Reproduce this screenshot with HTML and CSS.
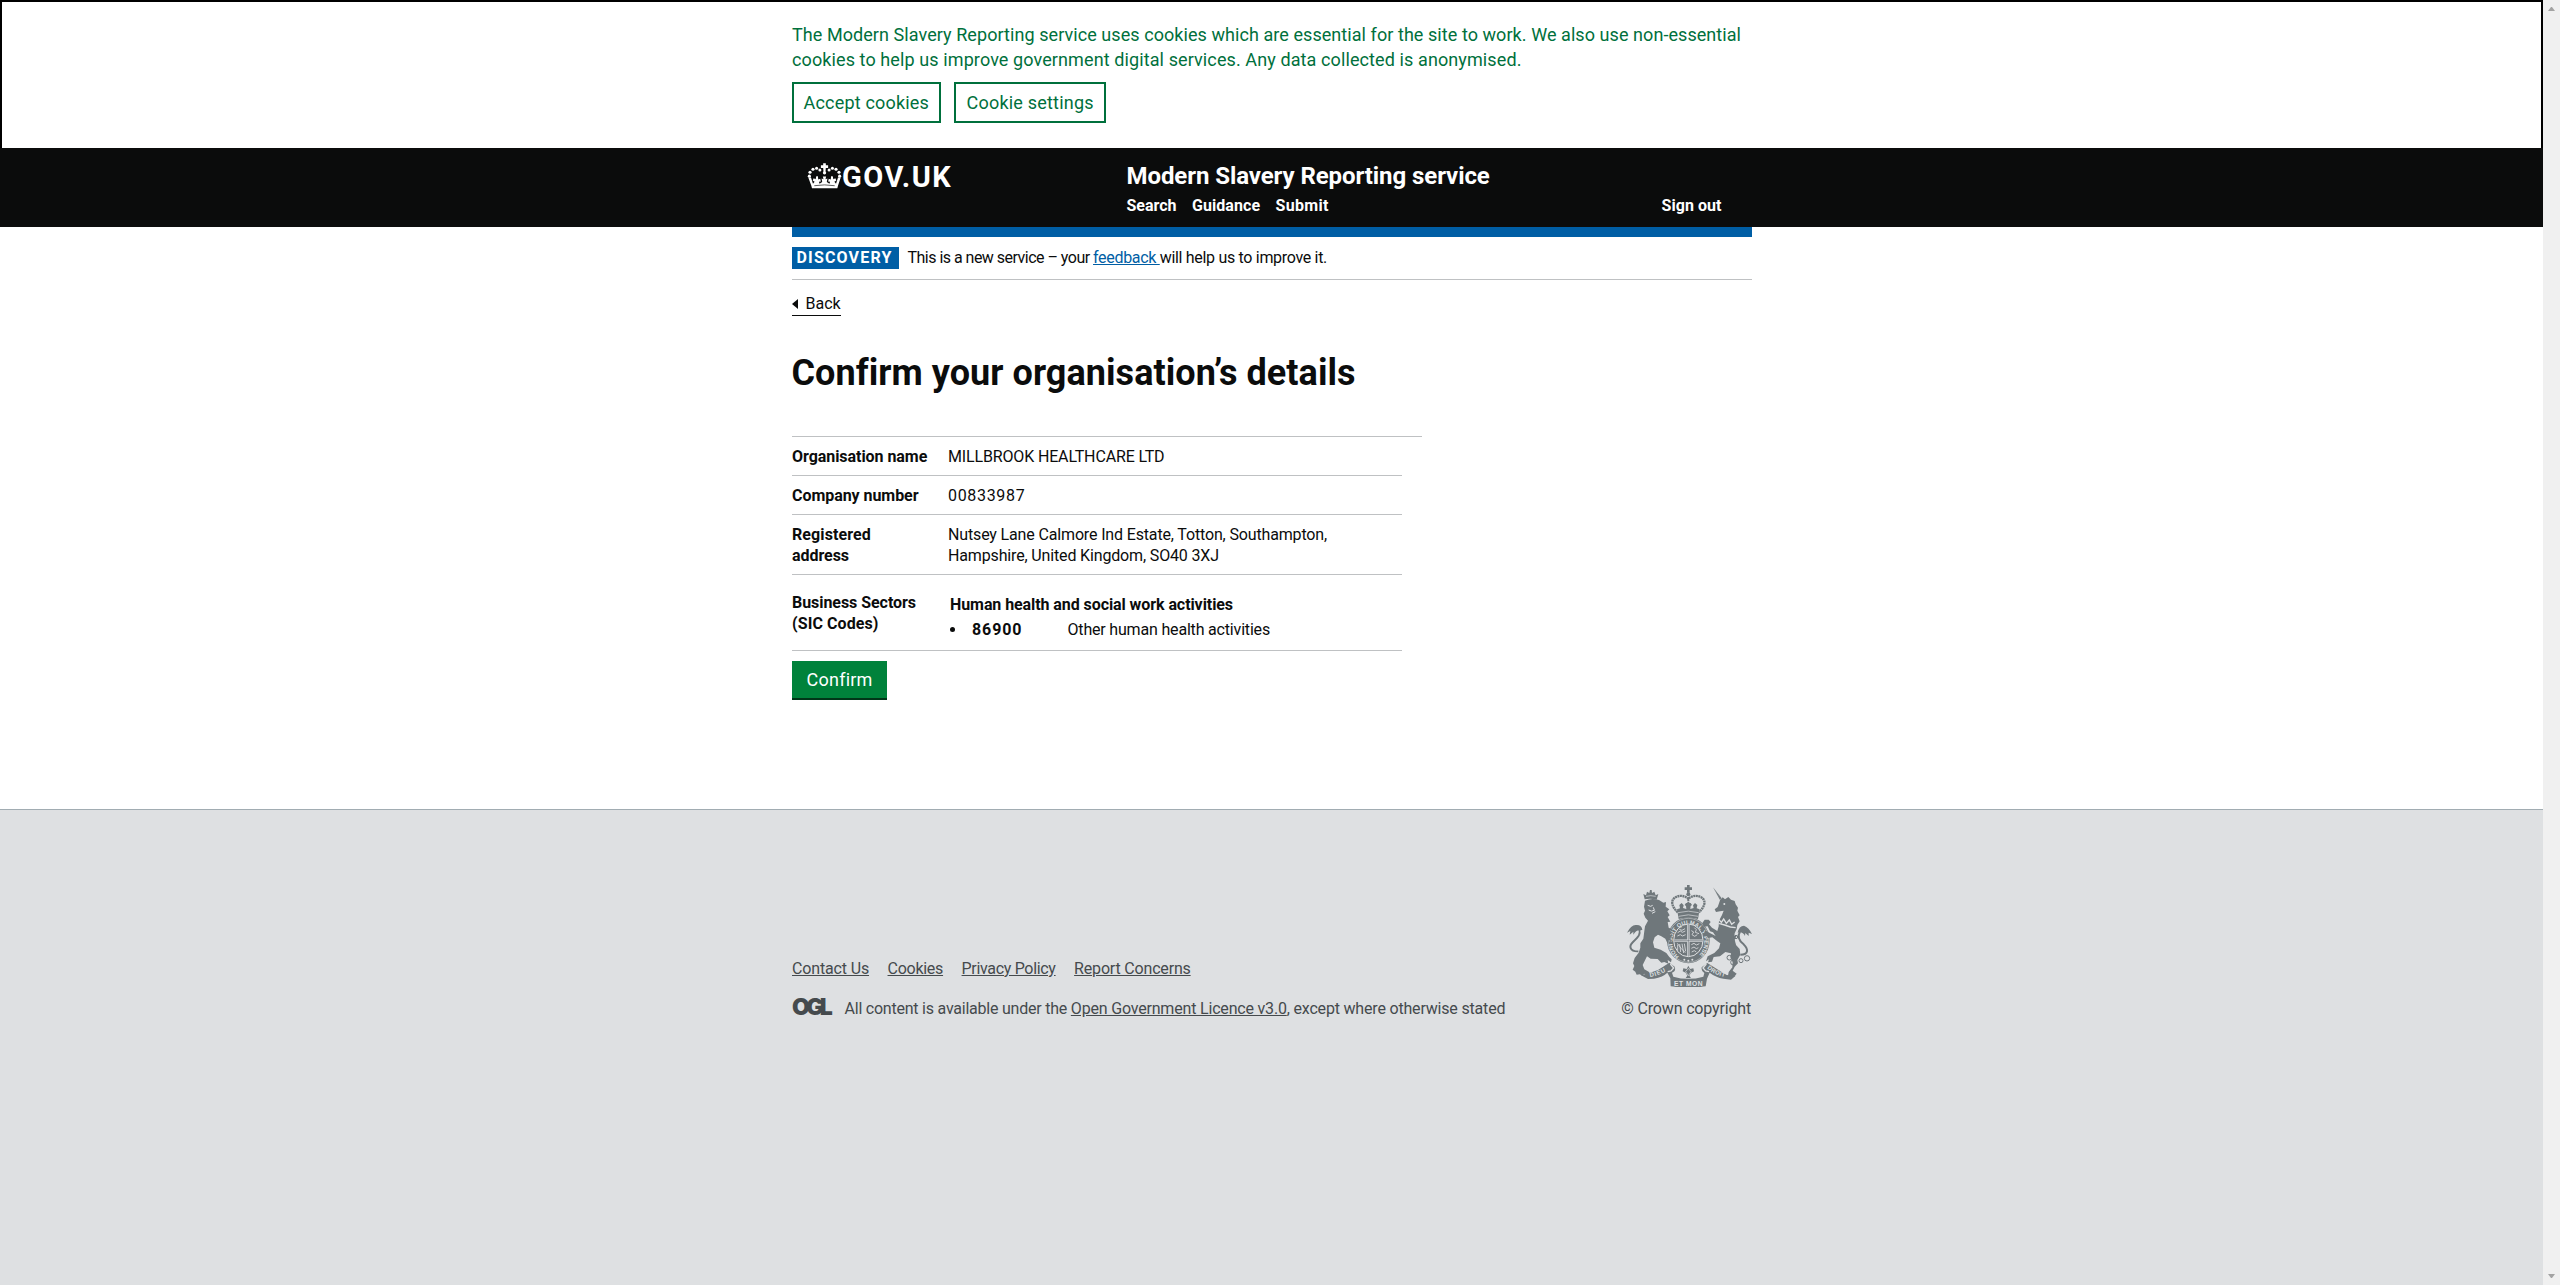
FILE: index.html
```html
<!DOCTYPE html>
<html lang="en">
<head>
<meta charset="utf-8">
<title>Confirm your organisation’s details</title>
<link rel="stylesheet" href="styles.css">
</head>
<body>
<div class="page">
  <section class="cookie-banner">
    <div class="wrap">
      <p class="cookie-text"><span class="cookie-line">The Modern Slavery Reporting service uses cookies which are essential for the site to work. We also use non-essential</span><br><span class="cookie-line-end">cookies to help us improve government digital services. Any data collected is anonymised.</span></p>
      <div class="cookie-actions">
        <a class="cookie-button accept">Accept cookies</a>
        <a class="cookie-button settings">Cookie settings</a>
      </div>
    </div>
  </section>

  <header class="header">
    <div class="wrap header-row">
      <a class="logo">
        <svg class="logo-crown" viewBox="22 23 104 79" fill="#fff">
          <path d="M70 24h8v6h7v8h-7l-1 12h-6l-1-12h-7v-8h7z"/>
          <circle cx="60" cy="44" r="4.6"/><circle cx="50" cy="39" r="4.6"/><circle cx="39" cy="42" r="4.8"/><circle cx="30" cy="51" r="4.8"/><circle cx="28" cy="63" r="4.8"/>
          <circle cx="88" cy="44" r="4.6"/><circle cx="98" cy="39" r="4.6"/><circle cx="109" cy="42" r="4.8"/><circle cx="118" cy="51" r="4.8"/><circle cx="120" cy="63" r="4.8"/>
          <circle cx="74" cy="53" r="5"/>
          <path d="M25 68l8-1 6 19 5-6-6-4 3-7 6 3 2-9 5 0 1 10 6-2 2 8-6 1 2 6 8-5-2-11 6 2-2-8h10l-2 8 6-2-2 11 8 5 2-6-6-1 2-8 6 2 1-10h5l2 9 6-3 3 7-6 4 5 6 6-19 8 1-8 24-2 8H36l-2-8z"/>
          <path d="M43 92q31-5 62 0" fill="none" stroke="#0b0c0c" stroke-width="2"/>
        </svg>
        <span class="logo-text">GOV.UK</span>
      </a>
      <div class="header-content">
        <div class="service-name">Modern Slavery Reporting service</div>
        <nav class="nav">
          <a>Search</a><a class="nav-guidance">Guidance</a><a class="nav-submit">Submit</a><a class="sign-out">Sign out</a>
        </nav>
      </div>
    </div>
  </header>

  <main class="main">
    <div class="wrap">
      <div class="blue-bar"></div>
      <div class="phase-banner">
        <strong class="phase-tag">DISCOVERY</strong>
        <span class="phase-text"><span class="phase-lead">This is a new service – your </span><a class="feedback">feedback </a>will help us to improve it.</span>
      </div>
      <a class="back"><i class="back-arrow"></i>Back</a>
      <h1 class="title">Confirm your organisation’s details</h1>

      <div class="details">
        <dl class="list">
          <div class="row"><dt>Organisation name</dt><dd>MILLBROOK HEALTHCARE LTD</dd></div>
          <div class="row"><dt>Company number</dt><dd class="digits">00833987</dd></div>
          <div class="row"><dt><span class="registered">Registered</span><br>address</dt><dd>Nutsey Lane Calmore Ind Estate, Totton, Southampton,<br>Hampshire, United Kingdom, SO40 3XJ</dd></div>
          <div class="row sectors"><dt>Business Sectors<br><span class="registered">(SIC Codes)</span></dt>
            <dd>
              <b>Human health and social work activities</b>
              <div class="sic"><i class="bullet"></i><b class="sic-code">86900</b><span class="sic-name">Other human health activities</span></div>
            </dd>
          </div>
        </dl>
      </div>
      <button class="confirm">Confirm</button>
    </div>
  </main>

  <footer class="footer">
    <div class="wrap footer-row">
      <div class="footer-meta">
        <nav class="footer-links"><a class="fl-1">Contact Us</a><a class="fl-2">Cookies</a><a class="fl-3">Privacy Policy</a><a class="fl-4">Report Concerns</a></nav>
        <div class="licence"><span class="ogl">OGL</span><span class="licence-text"><span class="licence-lead">All content is available under the </span><a>Open Government Licence v3.0</a>, except where otherwise stated</span></div>
      </div>
      <div class="copyright">
        <svg class="crest" viewBox="21 15 375 306" fill="#6f777b" stroke="none">
          <!-- royal crown -->
          <path d="M201 15h8v7h7v8h-7v8h-8v-8h-7v-8h7z"/>
          <circle cx="205" cy="43" r="6"/>
          <path d="M173 97C158 82 151 66 162 55C174 44 195 46 205 57C215 46 236 44 248 55C259 66 252 82 237 97" fill="none" stroke="#6f777b" stroke-width="7" stroke-dasharray="6 1.5"/>
          <path d="M205 52v34" stroke="#6f777b" stroke-width="6" stroke-dasharray="5 2"/>
          <path d="M171 88l9-3-2-10 7-6 6 7-2 8 10 3-1-9-4-3 4-6h14l4 6-4 3-1 9 10-3-2-8 6-7 7 6-2 10 9 3-5 29q-28-9-58 0z"/>
          <path d="M174 98q31-9 62 0M176 109q29-9 58 0" fill="none" stroke="#dee0e2" stroke-width="2"/>
          <!-- garter and shield -->
          <ellipse cx="205" cy="181" rx="64" ry="69"/>
          <ellipse cx="205" cy="181" rx="44" ry="49" fill="none" stroke="#dee0e2" stroke-width="3"/>
          <ellipse cx="205" cy="181" rx="61" ry="66" fill="none" stroke="#dee0e2" stroke-width="1.5"/>
          <path id="garter-line" d="M177 229A48 53 0 1 1 233 229" fill="none"/>
          <text class="crest-text" font-size="17"><textPath href="#garter-line" textLength="250">HONI SOIT QUI MAL Y PENSE</textPath></text>
          <path d="M205 134v94M163 182h84" stroke="#dee0e2" stroke-width="7"/>
          <path d="M205 134v94M163 182h84" stroke="#6f777b" stroke-width="2"/>
          <path d="M173 158l8-5 6 4 9-4M172 168l9-4 6 4 10-4M178 148l8 3 9-5M214 152l7 4-5 8 8 5 8-5M223 143l6 6-3 8 11 4M214 194l8-4 7 5 9-4M214 205l8-4 7 5 6-3M215 216l8-4 6 4M173 194v18M179 192l3 24M186 191l5 28M193 191l4 23M172 190q12 18 24 28" fill="none" stroke="#dee0e2" stroke-width="2.5"/>
          <circle cx="193" cy="239" r="3" fill="#dee0e2"/><circle cx="205" cy="242" r="3" fill="#dee0e2"/><circle cx="217" cy="239" r="3" fill="#dee0e2"/>
          <!-- lion -->
          <path d="M74 58l-4-16 8 4 3-11 7 4 2-9h5l1 9 7-4 4 11 8-4-5 17q-18-5-36-1z"/>
          <path d="M78 49q14-4 29 0" fill="none" stroke="#dee0e2" stroke-width="2"/>
          <path d="M75 62Q95 53 117 60L130 68 138 66 137 80 148 88 142 94 149 106 143 111 151 125 143 126 146 143 157 148 149 152 156 160 149 163 156 169 148 173 156 184 146 181 143 191 136 176 124 169 114 164 104 172 99 187 103 203 122 209 139 219 148 231 155 238 153 247 143 240 145 251 133 246 124 248 113 237 92 236 81 229 74 243 68 255 73 268 86 275 92 283 82 286 72 281 68 288 59 283 50 284 46 275 38 269 43 258 39 250 44 234 56 218 61 203 61 190 70 176 73 153 75 139 84 122 76 113 71 101 75 92 72 80z"/>
          <path d="M83 76l9 3 6-3M86 90q8 6 17 1l-3-9M96 100l10-5" fill="none" stroke="#dee0e2" stroke-width="3"/>
          <path d="M55 214C30 215 25 199 39 186C55 171 64 162 58 148" fill="none" stroke="#6f777b" stroke-width="6"/>
          <path d="M55 211C36 211 34 200 43 190C57 176 65 164 61 152" fill="none" stroke="#dee0e2" stroke-width="1.5"/>
          <path d="M67 150Q65 134 49 135Q34 133 21 158L31 153 29 164 40 155 40 164Q48 151 58 151Z"/>
          <!-- unicorn -->
          <path d="M279 22L305 55 300 60Z"/><path d="M282 29l20 27" stroke="#dee0e2" stroke-width="1" stroke-dasharray="2 3"/>
          <path d="M300 61L308 52 315 58 325 51 333 59 344 63 347 73 354 83 352 92 359 106 354 111 359 124 352 135 350 147 344 160 343 175 348 195 359 207 361 224 352 240 354 250 344 260 338 272 350 281 342 290 324 287 326 276 337 262 338 247 331 232 333 220 316 216 300 229 281 231 276 245 264 247 267 238 258 244 263 229 283 219 297 205 301 190 292 184 277 172 265 174 257 164 250 160 258 153 268 158 287 168 279 157 270 154 263 139 251 140 247 129 254 119 266 119 272 126 267 133 276 143 292 153 296 139 297 122 306 105 311 92 300 94 288 96 284 88 293 81 297 70z"/>
          <circle cx="313" cy="72" r="3" fill="#dee0e2"/>
          <path d="M297 119l7 8 7-10 8 13 9-10 7 13 9-7M296 130l18 5 17 6 16 2" fill="none" stroke="#dee0e2" stroke-width="4"/>
          <path d="M361 224C387 224 385 207 371 193C355 180 351 169 360 155" fill="none" stroke="#6f777b" stroke-width="6"/>
          <path d="M353 158Q357 137 372 137Q387 143 396 162L386 158 386 168 376 159 375 168Q368 154 353 158Z"/>
          <path d="M348 167l-8 14 5 15" fill="none" stroke="#6f777b" stroke-width="4"/>
          <g fill="none" stroke="#6f777b" stroke-width="3"><circle cx="328" cy="233" r="7"/><circle cx="340" cy="247" r="8"/><circle cx="363" cy="242" r="6"/><circle cx="381" cy="235" r="8"/><circle cx="348" cy="171" r="5"/></g>
          <!-- fleur-de-lis and motto ribbon -->
          <path d="M205 257l5 10 10-2 2 9-9 4-5 9 5 7h-16l5-7-5-9-9-4 2-9 10 2z"/>
          <path d="M197 275l8-10 8 10-8 12z" fill="none" stroke="#dee0e2" stroke-width="2"/>
          <path d="M63 286L84 297 102 296Q129 291 142 278L151 295 152 319Q205 327 257 319L261 296 269 278Q287 292 310 296L333 299 347 287 320 285 304 275 262 249 245 262Q243 274 253 279L250 290Q205 303 160 290L156 278Q169 274 164 260L148 248 114 270 88 279z"/>
          <path d="M151 252l10 12-8 9-10 2M259 252l-10 12 8 9 10 2" fill="none" stroke="#dee0e2" stroke-width="4"/>
          <path id="motto-left" d="M90 291Q121 287 148 267" fill="none"/><path id="motto-right" d="M261 265Q285 286 323 293" fill="none"/>
          <text class="crest-text" font-size="18"><textPath href="#motto-left" textLength="51">DIEU</textPath></text>
          <text class="crest-text" font-size="18"><textPath href="#motto-right" textLength="59">DROIT</textPath></text>
          <text class="crest-text" font-size="20" x="162" y="317" textLength="86">ET MON</text>
        </svg>
        <span class="copyright-text">© Crown copyright</span>
      </div>
    </div>
  </footer>
</div>
<aside class="scrollbar"><i class="arrow-up"></i><i class="arrow-down"></i></aside>
</body>
</html>
```
FILE: styles.css
```css
* { box-sizing: border-box; }
body {
  margin: 0;
  height: 1285px;
  display: flex;
  background: #fff;
  color: #0b0c0c;
  font: 400 16px/21px Roboto, "Liberation Sans", sans-serif;
  white-space: nowrap;
  overflow: hidden;
}
p, h1, dl, dd { margin: 0; }
.page { flex: 1; display: flex; flex-direction: column; }
.wrap { width: 960px; margin: 0 auto; }
.cookie-banner, .header, .main, .footer { padding-left: 1px; }

.cookie-banner {
  height: 148px;
  padding-top: 20px;
  border: 2px solid #000;
  border-bottom: 0;
  color: #00703c;
  font-size: 18px;
  line-height: 25px;
}
.cookie-line { letter-spacing: 0.065px; }
.cookie-line-end { letter-spacing: 0.105px; }
.cookie-actions { display: flex; gap: 13px; margin-top: 10px; }
.cookie-button { height: 41px; padding: 6px 9.5px; border: 2px solid #00703c; }
.accept { width: 149px; letter-spacing: 0.19px; }
.settings { width: 152px; padding-left: 10.5px; letter-spacing: 0.21px; }

.header { height: 79px; background: #0b0c0c; color: #fff; font-weight: 700; }
.header-row { display: flex; padding-top: 13px; }
.logo { display: flex; width: 334.5px; padding: 2px 0 0 15px; }
.logo-crown { width: 35px; height: 26px; }
.logo-text { font-size: 29px; line-height: 27px; letter-spacing: 1.5px; margin-top: 1px; }
.service-name { font-size: 24px; line-height: 30px; letter-spacing: -0.075px; }
.header-content { width: 595px; }
.nav { display: flex; gap: 15.5px; margin-top: 4px; }
.nav-guidance { letter-spacing: 0.05px; }
.nav-submit { letter-spacing: 0.28px; }
.sign-out { margin-left: auto; letter-spacing: 0.05px; }

.main { height: 582px; }
.blue-bar { height: 10px; background: #005ea5; }
.phase-banner { display: flex; padding: 10px 0; height: 43px; border-bottom: 1px solid #bfc1c3; }
.phase-tag { width: 107px; height: 22px; padding-left: 4.5px; background: #005ea5; color: #fff; letter-spacing: 1.17px; }
.phase-text { margin-left: 8.5px; letter-spacing: -0.31px; }
.phase-lead { letter-spacing: -0.52px; }
.feedback { color: #005ea5; text-decoration: underline; }
.back { display: flex; align-items: center; width: 49px; height: 23px; margin-top: 13px; padding-bottom: 1px; border-bottom: 1px solid #0b0c0c; }
.back-arrow { border: 5px solid transparent; border-left: 0; border-right: 6px solid #0b0c0c; margin-right: 7.5px; }
.title { margin: 37px 0 0 -0.5px; font-size: 36px; line-height: 40px; font-weight: 700; letter-spacing: 0.06px; }

.details { width: 630px; margin-top: 43px; border-top: 1px solid #bfc1c3; }
.list { width: 610px; }
.row { display: flex; padding: 9px 0 8px; border-bottom: 1px solid #bfc1c3; }
dt { width: 156px; font-weight: 700; letter-spacing: -0.05px; }
.registered { letter-spacing: 0.09px; }
dd { letter-spacing: -0.15px; }
.digits { letter-spacing: 0.68px; }
.sectors { padding-top: 17px; }
.sectors dd { padding-left: 2px; line-height: 25px; letter-spacing: -0.078px; }
.sic { display: flex; align-items: center; }
.bullet { width: 5px; height: 5px; border-radius: 50%; background: #0b0c0c; }
.sic-code { width: 95.5px; margin-left: 17px; letter-spacing: 0.9px; }
.sic-name { letter-spacing: -0.18px; }
.confirm {
  display: block;
  width: 95px;
  height: 37px;
  margin-top: 10px;
  padding: 6px 14.5px;
  border: 0;
  text-align: left;
  background: #00823b;
  box-shadow: 0 2px 0 #003618;
  color: #fff;
  font: 400 18px/25px Roboto, sans-serif;
  letter-spacing: 0.24px;
}

.footer { flex: 1; padding-top: 75px; border-top: 1px solid #a1acb2; background: #dee0e2; color: #454a4d; }
.footer-row { display: flex; justify-content: space-between; align-items: flex-end; }
.footer a { text-decoration: underline; }
.footer-links { display: flex; gap: 18.5px; }
.fl-1 { letter-spacing: -0.15px; }
.fl-2 { letter-spacing: -0.27px; }
.fl-3 { letter-spacing: -0.32px; }
.fl-4 { letter-spacing: -0.18px; }
.licence { display: flex; margin-top: 19px; }
.ogl { width: 52.5px; font: 900 23px/34px Inter, sans-serif; height: 21px; margin-top: -8px; letter-spacing: -3.7px; }
.licence-text { letter-spacing: -0.185px; }
.licence-lead { letter-spacing: -0.225px; }
.copyright { display: flex; flex-direction: column; align-items: flex-end; }
.crest { width: 125px; height: 102px; margin-bottom: 11px; }
.crest-text { font-family: "Liberation Sans", sans-serif; font-weight: 700; fill: #dee0e2; }
.copyright-text { margin-right: 1px; letter-spacing: -0.16px; }

.scrollbar { width: 17px; padding: 7px 5px; display: flex; flex-direction: column; justify-content: space-between; background: #f0f0f0; }
.arrow-up, .arrow-down { width: 7px; border: 3.5px solid transparent; }
.arrow-up { border-top: 0; border-bottom: 4px solid #a3a3a3; }
.arrow-down { border-bottom: 0; border-top: 4px solid #a3a3a3; }
```
